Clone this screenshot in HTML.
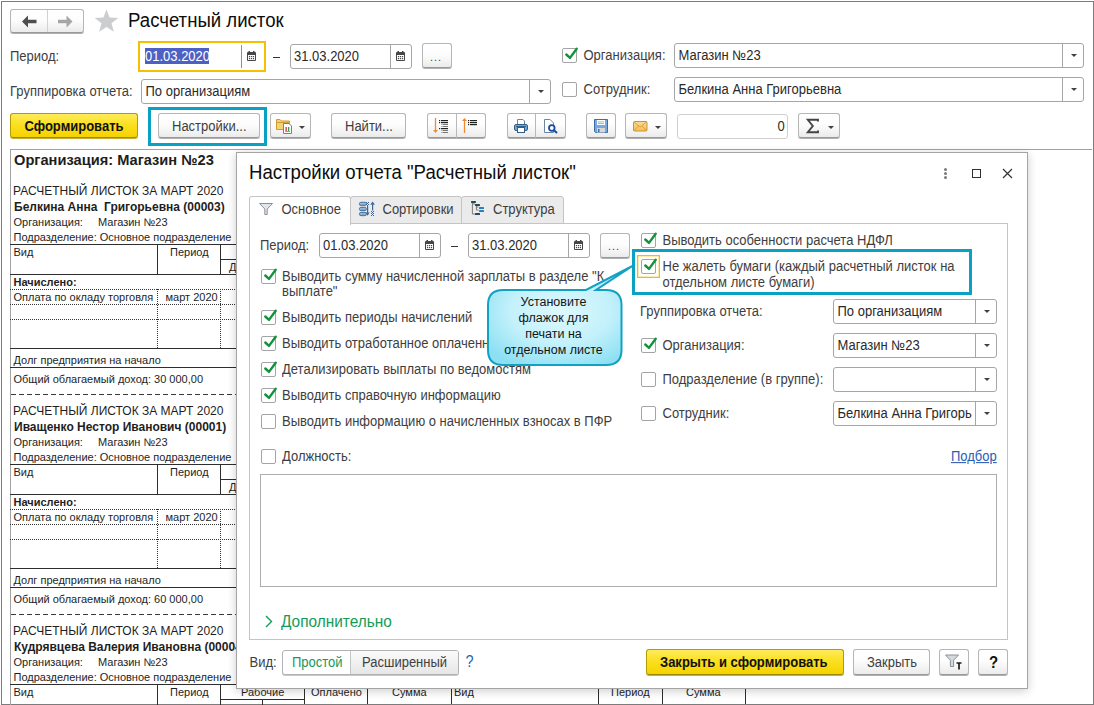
<!DOCTYPE html>
<html><head><meta charset="utf-8">
<style>
*{box-sizing:border-box;margin:0;padding:0}
html,body{width:1094px;height:705px;overflow:hidden;background:#fff}
body{position:relative;font-family:"Liberation Sans",sans-serif;font-size:13px;color:#333}
.a{position:absolute}
.t{position:absolute;white-space:nowrap;line-height:1}
.fld{position:absolute;border:1px solid #a6a6a6;border-radius:3px;background:#fff}
.dd{position:absolute;top:0;bottom:0;border-left:1px solid #a6a6a6}
.tri{position:absolute;width:0;height:0;border-left:3px solid transparent;border-right:3px solid transparent;border-top:3.5px solid #404040}
.btn{position:absolute;border:1px solid #b6b6b6;border-bottom-color:#999;border-radius:3px;background:linear-gradient(#fff 0%,#fdfdfd 45%,#ebebeb 100%);box-shadow:0 1px 0 #b0b0b0}
.ybtn{position:absolute;border:1px solid #b39b00;border-bottom-color:#9e8800;border-radius:3px;background:linear-gradient(#feeb5c,#fbe021 45%,#f5d300);box-shadow:0 1px 0 #c8b040}
.cb{position:absolute;width:15px;height:15px;border:1px solid #a4a4a4;border-radius:2px;background:#fff}
.rl{position:absolute;background:#2e2e2e}
.dot{position:absolute;height:1px;background-image:linear-gradient(90deg,#333 50%,transparent 50%);background-size:2px 1px}
.vdot{position:absolute;width:1px;background-image:linear-gradient(#333 50%,transparent 50%);background-size:1px 2px}
.dash{position:absolute;height:1px;background-image:linear-gradient(90deg,#3a3a3a 5px,transparent 5px);background-size:8px 1px;background-position:1px 0}
</style></head><body>
<div class="a" style="left:1px;top:1px;width:1093px;height:704px;border:1px solid #7c7c7c;"></div>
<div class="btn" style="left:10px;top:9px;width:74px;height:24px"></div>
<div class="a" style="left:47px;top:10px;width:1px;height:22px;background:#d2d2d2"></div>
<svg class="a" style="left:22px;top:15px" width="15" height="13" viewBox="0 0 15 13"><path d="M0 6.5 L6 0.5 L6 4.8 L14.5 4.8 L14.5 8.2 L6 8.2 L6 12.5 Z" fill="#4e4e4e"/></svg>
<svg class="a" style="left:58px;top:15px" width="15" height="13" viewBox="0 0 15 13"><path d="M14.5 6.5 L8.5 0.5 L8.5 4.8 L0 4.8 L0 8.2 L8.5 8.2 L8.5 12.5 Z" fill="#a6a6a6"/></svg>
<svg class="a" style="left:94px;top:9px" width="25" height="24" viewBox="0 0 25 24"><path d="M12.5 0.5 L15.6 8.6 L24.3 8.9 L17.5 14.3 L19.9 22.8 L12.5 17.9 L5.1 22.8 L7.5 14.3 L0.7 8.9 L9.4 8.6 Z" fill="#cbcdcf"/></svg>
<div class="t" style="left:128px;top:12.26px;font-size:18.6px;color:#0d0d0d;transform:scaleY(1.07);transform-origin:0 15.74px;">Расчетный листок</div>
<div class="t" style="left:10px;top:50.00px;font-size:13px;color:#3e3e3e;transform:scaleY(1.07);transform-origin:0 11.00px;">Период:</div>
<div class="a" style="left:138px;top:41px;width:128px;height:31px;border:2px solid #f3c100;background:#fff"></div>
<div class="a" style="left:241px;top:45px;width:1px;height:23px;background:#8e8e8e"></div>
<div class="a" style="left:145px;top:48px;width:64px;height:16px;background:#4d61c4"></div>
<div class="t" style="left:145px;top:50.00px;font-size:13px;color:#fff;transform:scaleY(1.07);transform-origin:0 11.00px;">01.03.2020</div>
<svg class="a" style="left:247px;top:51px" width="9" height="10" viewBox="0 0 9 10"><rect x="0" y="1" width="9" height="9" rx="1" fill="#474747"/><rect x="1" y="4" width="7" height="5" fill="#fff"/><g fill="#474747"><rect x="1.9" y="5" width="1.2" height="1.2"/><rect x="3.9" y="5" width="1.2" height="1.2"/><rect x="5.9" y="5" width="1.2" height="1.2"/><rect x="1.9" y="7" width="1.2" height="1.2"/><rect x="3.9" y="7" width="1.2" height="1.2"/><rect x="5.9" y="7" width="1.2" height="1.2"/></g><rect x="1.5" y="0" width="1.5" height="2.5" fill="#474747"/><rect x="6" y="0" width="1.5" height="2.5" fill="#474747"/></svg>
<div class="a" style="left:273px;top:57px;width:7px;height:1px;background:#333"></div>
<div class="fld" style="left:290px;top:44px;width:122px;height:25px"><div class="dd" style="left:99px"></div></div>
<div class="t" style="left:294px;top:50.00px;font-size:13px;color:#2a2a2a;transform:scaleY(1.07);transform-origin:0 11.00px;">31.03.2020</div>
<svg class="a" style="left:396px;top:51px" width="9" height="10" viewBox="0 0 9 10"><rect x="0" y="1" width="9" height="9" rx="1" fill="#474747"/><rect x="1" y="4" width="7" height="5" fill="#fff"/><g fill="#474747"><rect x="1.9" y="5" width="1.2" height="1.2"/><rect x="3.9" y="5" width="1.2" height="1.2"/><rect x="5.9" y="5" width="1.2" height="1.2"/><rect x="1.9" y="7" width="1.2" height="1.2"/><rect x="3.9" y="7" width="1.2" height="1.2"/><rect x="5.9" y="7" width="1.2" height="1.2"/></g><rect x="1.5" y="0" width="1.5" height="2.5" fill="#474747"/><rect x="6" y="0" width="1.5" height="2.5" fill="#474747"/></svg>
<div class="btn" style="left:422px;top:43px;width:30px;height:25px"></div>
<div class="t" style="left:430px;top:52px;font-size:11px;color:#444;letter-spacing:1px">...</div>
<div class="cb" style="left:562px;top:48px"><svg width="18" height="18" viewBox="0 0 18 18" style="position:absolute;left:-1px;top:-1px;overflow:visible"><path d="M4.3 6.5 L8 9.9 L14.7 0.7" stroke="#12923c" stroke-width="2.4" fill="none" stroke-linecap="round" stroke-linejoin="round"/></svg></div>
<div class="t" style="left:583.5px;top:49.00px;font-size:13px;color:#3e3e3e;transform:scaleY(1.07);transform-origin:0 11.00px;">Организация:</div>
<div class="fld" style="left:674px;top:43px;width:410px;height:25px"><div class="dd" style="left:387px"></div></div>
<div class="tri" style="left:1070.5px;top:53.5px"></div>
<div class="t" style="left:678.5px;top:49.00px;font-size:13px;color:#2a2a2a;transform:scaleY(1.07);transform-origin:0 11.00px;">Магазин №23</div>
<div class="t" style="left:10px;top:85.00px;font-size:13px;color:#3e3e3e;transform:scaleY(1.07);transform-origin:0 11.00px;">Группировка отчета:</div>
<div class="fld" style="left:141px;top:79px;width:410px;height:25px"><div class="dd" style="left:387px"></div></div>
<div class="tri" style="left:537.5px;top:89.5px"></div>
<div class="t" style="left:145.5px;top:85.00px;font-size:13px;color:#2a2a2a;transform:scaleY(1.07);transform-origin:0 11.00px;">По организациям</div>
<div class="cb" style="left:562px;top:82px"></div>
<div class="t" style="left:583.5px;top:83.00px;font-size:13px;color:#3e3e3e;transform:scaleY(1.07);transform-origin:0 11.00px;">Сотрудник:</div>
<div class="fld" style="left:674px;top:77px;width:410px;height:25px"><div class="dd" style="left:387px"></div></div>
<div class="tri" style="left:1070.5px;top:87.5px"></div>
<div class="t" style="left:678.5px;top:83.00px;font-size:13px;color:#2a2a2a;transform:scaleY(1.07);transform-origin:0 11.00px;">Белкина Анна Григорьевна</div>
<div class="ybtn" style="left:10px;top:113px;width:128px;height:25px"></div>
<div class="t" style="left:24.5px;top:120.00px;font-size:13px;color:#111;transform:scaleY(1.07);transform-origin:0 11.00px;font-weight:bold">Сформировать</div>
<div class="a" style="left:148px;top:107px;width:119px;height:39px;border:3px solid #0aa2c2"></div>
<div class="btn" style="left:158px;top:113px;width:102px;height:25px"></div>
<div class="t" style="left:172px;top:120.00px;font-size:13px;color:#3e3e3e;transform:scaleY(1.07);transform-origin:0 11.00px;">Настройки...</div>
<div class="btn" style="left:270px;top:113px;width:41px;height:25px"></div>
<svg class="a" style="left:275px;top:117px" width="18" height="18" viewBox="275 117 18 18">
<path d="M276.5 119.5 L280 119.5 L281.5 121 L289.5 121 L289.5 129.5 L276.5 129.5 Z" fill="#f3d27a" stroke="#d29a32" stroke-width="1"/>
<rect x="276.5" y="122" width="13" height="1" fill="#d29a32"/>
<path d="M283.5 123.5 L289 123.5 L291.5 126 L291.5 133.5 L283.5 133.5 Z" fill="#fff" stroke="#6c84a0" stroke-width="1"/>
<rect x="285.5" y="127" width="1.3" height="4" fill="#e03030"/><rect x="288" y="127" width="1.3" height="4" fill="#30a040"/><rect x="285" y="131.2" width="5" height="0.8" fill="#888"/>
</svg>
<div class="tri" style="left:299px;top:126.0px"></div>
<div class="btn" style="left:331px;top:113px;width:75px;height:25px"></div>
<div class="t" style="left:345px;top:120.00px;font-size:13px;color:#3e3e3e;transform:scaleY(1.07);transform-origin:0 11.00px;">Найти...</div>
<div class="btn" style="left:427px;top:113px;width:59px;height:25px"></div>
<div class="a" style="left:456px;top:114px;width:1px;height:24px;background:#b8b8b8"></div>
<svg class="a" style="left:430px;top:116px" width="55" height="20" viewBox="430 116 55 20">
<g stroke="#ee8a30" stroke-width="1.3" fill="#ee8a30"><path d="M435.5 118 L435.5 131" fill="none"/><path d="M433 130 L438 130 L435.5 133 Z" stroke="none"/>
<path d="M464.5 120 L464.5 133" fill="none"/><path d="M462 121 L467 121 L464.5 118 Z" stroke="none"/></g>
<g fill="#222"><rect x="439" y="120" width="1.2" height="1.2"/><rect x="441" y="120" width="7" height="1.2"/><rect x="439" y="122" width="1.2" height="1.2"/><rect x="441" y="122" width="7" height="1.2"/><rect x="439" y="128" width="1.2" height="1.2"/><rect x="441" y="128" width="7" height="1.2"/></g>
<g fill="#777"><rect x="441.5" y="124" width="1" height="1"/><rect x="443" y="124" width="5" height="1"/><rect x="441.5" y="126" width="1" height="1"/><rect x="443" y="126" width="5" height="1"/><rect x="441.5" y="130" width="1" height="1"/><rect x="443" y="130" width="5" height="1"/><rect x="441.5" y="132" width="1" height="1"/><rect x="443" y="132" width="5" height="1"/></g>
<g fill="#222"><rect x="468" y="120" width="1.2" height="1.2"/><rect x="470" y="120" width="7" height="1.2"/><rect x="468" y="122" width="1.2" height="1.2"/><rect x="470" y="122" width="7" height="1.2"/><rect x="468" y="124" width="1.2" height="1.2"/><rect x="470" y="124" width="7" height="1.2"/></g>
</svg>
<div class="btn" style="left:507px;top:113px;width:59px;height:25px"></div>
<div class="a" style="left:535px;top:114px;width:1px;height:24px;background:#b8b8b8"></div>
<svg class="a" style="left:510px;top:116px" width="50" height="20" viewBox="510 116 50 20">
<path d="M517.5 119.5 L523 119.5 L524.5 121 L524.5 124.5 L517.5 124.5 Z" fill="#fff" stroke="#6c84a0" stroke-width="1"/>
<rect x="514.5" y="124.5" width="13" height="6" rx="1.5" fill="#7aa7d0" stroke="#2e5f8a" stroke-width="1"/>
<rect x="516" y="126" width="10" height="1" fill="#2e5f8a"/>
<rect x="517.5" y="127.5" width="7" height="5" fill="#fff" stroke="#2e5f8a" stroke-width="1"/>
<path d="M544.5 119.5 L550 119.5 L553.5 123 L553.5 132.5 L544.5 132.5 Z" fill="#fff" stroke="#6c84a0" stroke-width="1"/>
<circle cx="551.8" cy="128" r="2.8" fill="#fff" stroke="#1a4b9c" stroke-width="1.8"/>
<path d="M553.8 130 L557 133" stroke="#1a4b9c" stroke-width="2"/>
</svg>
<div class="btn" style="left:586px;top:113px;width:30px;height:25px"></div>
<svg class="a" style="left:592px;top:117px" width="18" height="18" viewBox="592 117 18 18">
<path d="M594.5 119.5 L607.5 119.5 L607.5 132.5 L595.5 132.5 L594.5 131.5 Z" fill="#79a8dc" stroke="#3d6ea6" stroke-width="1"/>
<rect x="597" y="120" width="8" height="5" fill="#fff"/><rect x="598" y="121.5" width="6" height="0.8" fill="#8ab"/><rect x="598" y="123" width="6" height="0.8" fill="#8ab"/>
<rect x="597" y="128" width="8" height="4.5" fill="#d8d8d8"/><rect x="598" y="129" width="1.5" height="3" fill="#3d6ea6"/>
</svg>
<div class="btn" style="left:625px;top:113px;width:42px;height:25px"></div>
<svg class="a" style="left:632px;top:120px" width="17" height="12" viewBox="632 120 17 12">
<defs><linearGradient id="env" x1="0" y1="0" x2="0" y2="1"><stop offset="0" stop-color="#f8dc96"/><stop offset="1" stop-color="#f0c060"/></linearGradient></defs>
<rect x="633.5" y="121.5" width="13.5" height="9.5" rx="1" fill="url(#env)" stroke="#d8902c" stroke-width="1"/>
<path d="M634 122 L640.2 127 L646.5 122 M634 130.5 L638.5 126 M646.5 130.5 L642 126" stroke="#d8902c" stroke-width="0.8" fill="none"/>
</svg>
<div class="tri" style="left:654.5px;top:126.0px"></div>
<div class="a" style="left:677px;top:114px;width:111px;height:25px;border:1px solid #d0d0d0;border-radius:3px"></div>
<div class="t" style="left:777.5px;top:120.00px;font-size:13px;color:#2a2a2a;transform:scaleY(1.07);transform-origin:0 11.00px;">0</div>
<div class="btn" style="left:798px;top:113px;width:42px;height:25px"></div>
<svg class="a" style="left:805px;top:118px" width="15" height="16" viewBox="805 118 15 16">
<path d="M818 121.5 L818 119.8 L807.8 119.8 L812.8 126 L807.8 132.2 L818 132.2 L818 130.5" stroke="#444" stroke-width="1.9" fill="none" stroke-linejoin="miter"/>
</svg>
<div class="tri" style="left:827.5px;top:126.0px"></div>
<div class="a" style="left:10px;top:149px;width:1082px;height:1px;background:#a2a2a2"></div>
<div class="a" style="left:10px;top:149px;width:1px;height:556px;background:#a2a2a2"></div>
<div class="t" style="left:14px;top:152.60px;font-size:14.65px;color:#1e1e1e;font-weight:bold;">Организация: Магазин №23</div>
<div class="t" style="left:13px;top:184.84px;font-size:12px;color:#1e1e1e;">РАСЧЕТНЫЙ ЛИСТОК ЗА МАРТ 2020</div>
<div class="t" style="left:14px;top:200.84px;font-size:12px;color:#1e1e1e;font-weight:bold;">Белкина Анна&nbsp; Григорьевна (00003)</div>
<div class="t" style="left:13.5px;top:216.69px;font-size:11px;color:#1e1e1e;">Организация:</div>
<div class="t" style="left:98px;top:216.69px;font-size:11px;color:#1e1e1e;">Магазин №23</div>
<div class="t" style="left:13.5px;top:231.69px;font-size:11px;color:#1e1e1e;">Подразделение: Основное подразделение</div>
<div class="rl" style="left:10px;top:244px;width:226px;height:1px"></div>
<div class="t" style="left:13.5px;top:247.19px;font-size:11px;color:#1e1e1e;">Вид</div>
<div class="t" style="left:170px;top:247.19px;font-size:11px;color:#1e1e1e;">Период</div>
<div class="rl" style="left:157px;top:244px;width:1px;height:30px"></div>
<div class="rl" style="left:220px;top:244px;width:1px;height:30px"></div>
<div class="rl" style="left:220px;top:259px;width:16px;height:1px"></div>
<div class="t" style="left:229px;top:261.69px;font-size:11px;color:#1e1e1e;">Д</div>
<div class="rl" style="left:10px;top:274px;width:226px;height:1px"></div>
<div class="t" style="left:13.5px;top:276.69px;font-size:11px;color:#1e1e1e;font-weight:bold;">Начислено:</div>
<div class="dot" style="left:10px;top:289px;width:226px;height:1px"></div>
<div class="t" style="left:13.5px;top:291.69px;font-size:11px;color:#1e1e1e;">Оплата по окладу торговля</div>
<div class="t" style="left:165.5px;top:291.69px;font-size:11px;color:#1e1e1e;">март 2020</div>
<div class="dot" style="left:10px;top:304px;width:226px;height:1px"></div>
<div class="dot" style="left:10px;top:319px;width:226px;height:1px"></div>
<div class="vdot" style="left:157px;top:289px;width:1px;height:59px"></div>
<div class="vdot" style="left:220px;top:289px;width:1px;height:59px"></div>
<div class="rl" style="left:10px;top:348px;width:226px;height:1px"></div>
<div class="t" style="left:13.5px;top:354.69px;font-size:11px;color:#1e1e1e;">Долг предприятия на начало</div>
<div class="rl" style="left:10px;top:367px;width:226px;height:1px"></div>
<div class="t" style="left:13.5px;top:373.69px;font-size:11px;color:#1e1e1e;">Общий облагаемый доход: 30 000,00</div>
<div class="dash" style="left:10px;top:394px;width:226px;height:1px"></div>
<div class="t" style="left:13px;top:404.84px;font-size:12px;color:#1e1e1e;">РАСЧЕТНЫЙ ЛИСТОК ЗА МАРТ 2020</div>
<div class="t" style="left:14px;top:420.84px;font-size:12px;color:#1e1e1e;font-weight:bold;">Иващенко Нестор Иванович (00001)</div>
<div class="t" style="left:13.5px;top:436.69px;font-size:11px;color:#1e1e1e;">Организация:</div>
<div class="t" style="left:98px;top:436.69px;font-size:11px;color:#1e1e1e;">Магазин №23</div>
<div class="t" style="left:13.5px;top:451.69px;font-size:11px;color:#1e1e1e;">Подразделение: Основное подразделение</div>
<div class="rl" style="left:10px;top:464px;width:226px;height:1px"></div>
<div class="t" style="left:13.5px;top:467.19px;font-size:11px;color:#1e1e1e;">Вид</div>
<div class="t" style="left:170px;top:467.19px;font-size:11px;color:#1e1e1e;">Период</div>
<div class="rl" style="left:157px;top:464px;width:1px;height:30px"></div>
<div class="rl" style="left:220px;top:464px;width:1px;height:30px"></div>
<div class="rl" style="left:220px;top:479px;width:16px;height:1px"></div>
<div class="t" style="left:229px;top:481.69px;font-size:11px;color:#1e1e1e;">Д</div>
<div class="rl" style="left:10px;top:494px;width:226px;height:1px"></div>
<div class="t" style="left:13.5px;top:496.69px;font-size:11px;color:#1e1e1e;font-weight:bold;">Начислено:</div>
<div class="dot" style="left:10px;top:509px;width:226px;height:1px"></div>
<div class="t" style="left:13.5px;top:511.69px;font-size:11px;color:#1e1e1e;">Оплата по окладу торговля</div>
<div class="t" style="left:165.5px;top:511.69px;font-size:11px;color:#1e1e1e;">март 2020</div>
<div class="dot" style="left:10px;top:524px;width:226px;height:1px"></div>
<div class="dot" style="left:10px;top:539px;width:226px;height:1px"></div>
<div class="vdot" style="left:157px;top:509px;width:1px;height:59px"></div>
<div class="vdot" style="left:220px;top:509px;width:1px;height:59px"></div>
<div class="rl" style="left:10px;top:568px;width:226px;height:1px"></div>
<div class="t" style="left:13.5px;top:574.69px;font-size:11px;color:#1e1e1e;">Долг предприятия на начало</div>
<div class="rl" style="left:10px;top:587px;width:226px;height:1px"></div>
<div class="t" style="left:13.5px;top:593.69px;font-size:11px;color:#1e1e1e;">Общий облагаемый доход: 60 000,00</div>
<div class="dash" style="left:10px;top:614px;width:226px;height:1px"></div>
<div class="t" style="left:13px;top:624.84px;font-size:12px;color:#1e1e1e;">РАСЧЕТНЫЙ ЛИСТОК ЗА МАРТ 2020</div>
<div class="t" style="left:14px;top:640.84px;font-size:12px;color:#1e1e1e;font-weight:bold;">Кудрявцева Валерия Ивановна (00004)</div>
<div class="t" style="left:13.5px;top:656.69px;font-size:11px;color:#1e1e1e;">Организация:</div>
<div class="t" style="left:98px;top:656.69px;font-size:11px;color:#1e1e1e;">Магазин №23</div>
<div class="t" style="left:13.5px;top:671.69px;font-size:11px;color:#1e1e1e;">Подразделение: Основное подразделение</div>
<div class="rl" style="left:10px;top:684px;width:226px;height:1px"></div>
<div class="t" style="left:13.5px;top:687.19px;font-size:11px;color:#1e1e1e;">Вид</div>
<div class="t" style="left:170px;top:687.19px;font-size:11px;color:#1e1e1e;">Период</div>
<div class="rl" style="left:157px;top:684px;width:1px;height:30px"></div>
<div class="rl" style="left:220px;top:684px;width:1px;height:30px"></div>
<div class="rl" style="left:220px;top:699px;width:84px;height:1px"></div>
<div class="rl" style="left:262px;top:699px;width:1px;height:6px"></div>
<div class="rl" style="left:220px;top:686px;width:1px;height:18px"></div>
<div class="rl" style="left:304px;top:686px;width:1px;height:18px"></div>
<div class="rl" style="left:367px;top:686px;width:1px;height:18px"></div>
<div class="rl" style="left:451px;top:686px;width:1px;height:18px"></div>
<div class="rl" style="left:598px;top:686px;width:1px;height:18px"></div>
<div class="rl" style="left:662px;top:686px;width:1px;height:18px"></div>
<div class="rl" style="left:745px;top:686px;width:1px;height:18px"></div>
<div class="t" style="left:241px;top:686.69px;font-size:11px;color:#1e1e1e;">Рабочие</div>
<div class="t" style="left:311px;top:686.69px;font-size:11px;color:#1e1e1e;">Оплачено</div>
<div class="t" style="left:392px;top:686.69px;font-size:11px;color:#1e1e1e;">Сумма</div>
<div class="t" style="left:454px;top:686.69px;font-size:11px;color:#1e1e1e;">Вид</div>
<div class="t" style="left:611px;top:686.69px;font-size:11px;color:#1e1e1e;">Период</div>
<div class="t" style="left:686px;top:686.69px;font-size:11px;color:#1e1e1e;">Сумма</div>
<div class="a" style="left:236px;top:152px;width:792px;height:537px;border:1px solid #a4a4a4;background:#fff;box-shadow:0 2px 9px rgba(0,0,0,0.20)"></div>
<div class="t" style="left:249px;top:164.26px;font-size:18.6px;color:#0d0d0d;transform:scaleY(1.07);transform-origin:0 15.74px;">Настройки отчета "Расчетный листок"</div>
<div class="a" style="left:944px;top:168px;width:3px;height:3px;border-radius:50%;background:#7a7a7a"></div>
<div class="a" style="left:944px;top:172px;width:3px;height:3px;border-radius:50%;background:#7a7a7a"></div>
<div class="a" style="left:944px;top:176px;width:3px;height:3px;border-radius:50%;background:#7a7a7a"></div>
<div class="a" style="left:972px;top:169px;width:9px;height:9px;border:1.3px solid #303030"></div>
<svg class="a" style="left:1002px;top:168px" width="11" height="11" viewBox="0 0 11 11"><path d="M1 1 L10 10 M10 1 L1 10" stroke="#303030" stroke-width="1.15"/></svg>
<div class="a" style="left:350px;top:196px;width:112px;height:28px;border:1px solid #c4c4c4;border-radius:3px 3px 0 0;background:#ebebeb"></div>
<div class="a" style="left:461px;top:196px;width:103px;height:28px;border:1px solid #c4c4c4;border-radius:3px 3px 0 0;background:#ebebeb"></div>
<div class="a" style="left:249px;top:223px;width:759px;height:417px;border:1px solid #c4c4c4;background:#fff"></div>
<div class="a" style="left:249px;top:196px;width:102px;height:29px;border:1px solid #c4c4c4;border-bottom:none;border-radius:3px 3px 0 0;background:#fff"></div>
<svg class="a" style="left:259px;top:203px" width="14" height="12" viewBox="0 0 14 12"><path d="M0.5 0.5 L13.5 0.5 L8.2 6 L8.2 11.5 L5.8 11.5 L5.8 6 Z" fill="#e2e5ea" stroke="#8a9099" stroke-width="1"/></svg>
<div class="t" style="left:281.5px;top:203.00px;font-size:13px;color:#3e3e3e;transform:scaleY(1.07);transform-origin:0 11.00px;">Основное</div>
<svg class="a" style="left:355px;top:199px" width="25" height="20" viewBox="0 0 25 20"><defs><linearGradient id="sb" x1="0" y1="0" x2="0" y2="1"><stop offset="0" stop-color="#3f6f9c"/><stop offset="0.45" stop-color="#a9cde6"/><stop offset="1" stop-color="#3f6f9c"/></linearGradient></defs><g fill="url(#sb)" stroke="#3d6a96" stroke-width="0.7"><rect x="4.3" y="3.2" width="7.2" height="3.4" rx="1.7"/><rect x="4.3" y="8.3" width="7.2" height="3.4" rx="1.7"/><rect x="4.3" y="13.3" width="7.2" height="3.4" rx="1.7"/></g><g fill="#3a6797"><rect x="11" y="3" width="1" height="1"/><rect x="13" y="3" width="1" height="1"/><rect x="12" y="4" width="1" height="1"/><rect x="11" y="5" width="1" height="1"/><rect x="13" y="5" width="1" height="1"/><rect x="12" y="6" width="1" height="1"/><rect x="12" y="7" width="1.2" height="7"/><path d="M10.6 13.5 L14.6 13.5 L12.6 16.8 Z"/><path d="M15.3 5.8 L19.9 5.8 L17.6 2.6 Z"/><rect x="17" y="5.5" width="1.2" height="6"/><rect x="16" y="12" width="1" height="1"/><rect x="18" y="12" width="1" height="1"/><rect x="17" y="13" width="1" height="1"/><rect x="16" y="14" width="1" height="1"/><rect x="18" y="14" width="1" height="1"/><rect x="17" y="15" width="1" height="1"/><rect x="16" y="16" width="1" height="1"/><rect x="18" y="16" width="1" height="1"/></g></svg>
<div class="t" style="left:382.5px;top:203.00px;font-size:13px;color:#3e3e3e;transform:scaleY(1.07);transform-origin:0 11.00px;">Сортировки</div>
<svg class="a" style="left:467px;top:199px" width="25" height="20" viewBox="0 0 25 20"><path d="M5.4 3 L5.4 15 L8 15 M5.4 5 L8 5 M9.4 6 L9.4 11 L11.5 11 M9.4 8 L11.5 8" stroke="#7a7a7a" stroke-width="1" fill="none"/><g fill="#244a60"><rect x="4" y="1.9" width="5" height="2" rx="0.6"/><rect x="8" y="5" width="5" height="2" rx="0.6"/><rect x="8" y="14" width="5" height="2" rx="0.6"/></g><g fill="#2a7fc0"><rect x="12" y="8" width="5" height="2" rx="0.6"/><rect x="12" y="11" width="5" height="2" rx="0.6"/></g></svg>
<div class="t" style="left:493px;top:203.00px;font-size:13px;color:#3e3e3e;transform:scaleY(1.07);transform-origin:0 11.00px;">Структура</div>
<div class="t" style="left:260px;top:239.00px;font-size:13px;color:#3e3e3e;transform:scaleY(1.07);transform-origin:0 11.00px;">Период:</div>
<div class="fld" style="left:319px;top:233px;width:122px;height:25px"><div class="dd" style="left:99px"></div></div>
<div class="t" style="left:323px;top:239.00px;font-size:13px;color:#2a2a2a;transform:scaleY(1.07);transform-origin:0 11.00px;">01.03.2020</div>
<svg class="a" style="left:425px;top:240px" width="9" height="10" viewBox="0 0 9 10"><rect x="0" y="1" width="9" height="9" rx="1" fill="#474747"/><rect x="1" y="4" width="7" height="5" fill="#fff"/><g fill="#474747"><rect x="1.9" y="5" width="1.2" height="1.2"/><rect x="3.9" y="5" width="1.2" height="1.2"/><rect x="5.9" y="5" width="1.2" height="1.2"/><rect x="1.9" y="7" width="1.2" height="1.2"/><rect x="3.9" y="7" width="1.2" height="1.2"/><rect x="5.9" y="7" width="1.2" height="1.2"/></g><rect x="1.5" y="0" width="1.5" height="2.5" fill="#474747"/><rect x="6" y="0" width="1.5" height="2.5" fill="#474747"/></svg>
<div class="a" style="left:451px;top:246px;width:7px;height:1px;background:#333"></div>
<div class="fld" style="left:468px;top:233px;width:122px;height:25px"><div class="dd" style="left:99px"></div></div>
<div class="t" style="left:472px;top:239.00px;font-size:13px;color:#2a2a2a;transform:scaleY(1.07);transform-origin:0 11.00px;">31.03.2020</div>
<svg class="a" style="left:574px;top:240px" width="9" height="10" viewBox="0 0 9 10"><rect x="0" y="1" width="9" height="9" rx="1" fill="#474747"/><rect x="1" y="4" width="7" height="5" fill="#fff"/><g fill="#474747"><rect x="1.9" y="5" width="1.2" height="1.2"/><rect x="3.9" y="5" width="1.2" height="1.2"/><rect x="5.9" y="5" width="1.2" height="1.2"/><rect x="1.9" y="7" width="1.2" height="1.2"/><rect x="3.9" y="7" width="1.2" height="1.2"/><rect x="5.9" y="7" width="1.2" height="1.2"/></g><rect x="1.5" y="0" width="1.5" height="2.5" fill="#474747"/><rect x="6" y="0" width="1.5" height="2.5" fill="#474747"/></svg>
<div class="btn" style="left:600px;top:233px;width:30px;height:25px"></div>
<div class="t" style="left:608px;top:241px;font-size:11px;color:#444;letter-spacing:1px">...</div>
<div class="cb" style="left:261px;top:269px"><svg width="18" height="18" viewBox="0 0 18 18" style="position:absolute;left:-1px;top:-1px;overflow:visible"><path d="M4.3 6.5 L8 9.9 L14.7 0.7" stroke="#12923c" stroke-width="2.4" fill="none" stroke-linecap="round" stroke-linejoin="round"/></svg></div>
<div class="t" style="left:282px;top:270.00px;font-size:13px;color:#3e3e3e;transform:scaleY(1.07);transform-origin:0 11.00px;">Выводить сумму начисленной зарплаты в разделе "К</div>
<div class="cb" style="left:261px;top:310px"><svg width="18" height="18" viewBox="0 0 18 18" style="position:absolute;left:-1px;top:-1px;overflow:visible"><path d="M4.3 6.5 L8 9.9 L14.7 0.7" stroke="#12923c" stroke-width="2.4" fill="none" stroke-linecap="round" stroke-linejoin="round"/></svg></div>
<div class="t" style="left:282px;top:311.00px;font-size:13px;color:#3e3e3e;transform:scaleY(1.07);transform-origin:0 11.00px;">Выводить периоды начислений</div>
<div class="cb" style="left:261px;top:336px"><svg width="18" height="18" viewBox="0 0 18 18" style="position:absolute;left:-1px;top:-1px;overflow:visible"><path d="M4.3 6.5 L8 9.9 L14.7 0.7" stroke="#12923c" stroke-width="2.4" fill="none" stroke-linecap="round" stroke-linejoin="round"/></svg></div>
<div class="t" style="left:282px;top:337.00px;font-size:13px;color:#3e3e3e;transform:scaleY(1.07);transform-origin:0 11.00px;">Выводить отработанное оплаченное время</div>
<div class="cb" style="left:261px;top:362px"><svg width="18" height="18" viewBox="0 0 18 18" style="position:absolute;left:-1px;top:-1px;overflow:visible"><path d="M4.3 6.5 L8 9.9 L14.7 0.7" stroke="#12923c" stroke-width="2.4" fill="none" stroke-linecap="round" stroke-linejoin="round"/></svg></div>
<div class="t" style="left:282px;top:363.00px;font-size:13px;color:#3e3e3e;transform:scaleY(1.07);transform-origin:0 11.00px;">Детализировать выплаты по ведомостям</div>
<div class="cb" style="left:261px;top:388px"><svg width="18" height="18" viewBox="0 0 18 18" style="position:absolute;left:-1px;top:-1px;overflow:visible"><path d="M4.3 6.5 L8 9.9 L14.7 0.7" stroke="#12923c" stroke-width="2.4" fill="none" stroke-linecap="round" stroke-linejoin="round"/></svg></div>
<div class="t" style="left:282px;top:389.00px;font-size:13px;color:#3e3e3e;transform:scaleY(1.07);transform-origin:0 11.00px;">Выводить справочную информацию</div>
<div class="cb" style="left:261px;top:414px"></div>
<div class="t" style="left:282px;top:415.00px;font-size:13px;color:#3e3e3e;transform:scaleY(1.07);transform-origin:0 11.00px;">Выводить информацию о начисленных взносах в ПФР</div>
<div class="t" style="left:282px;top:285.00px;font-size:13px;color:#3e3e3e;transform:scaleY(1.07);transform-origin:0 11.00px;">выплате"</div>
<div class="cb" style="left:261px;top:449px"></div>
<div class="t" style="left:282px;top:450.00px;font-size:13px;color:#3e3e3e;transform:scaleY(1.07);transform-origin:0 11.00px;">Должность:</div>
<div class="t" style="left:951px;top:450.00px;font-size:13px;color:#2a5db5;transform:scaleY(1.07);transform-origin:0 11.00px;text-decoration:underline">Подбор</div>
<div class="a" style="left:260px;top:474px;width:737px;height:113px;border:1px solid #adadad"></div>
<div class="cb" style="left:641px;top:233px"><svg width="18" height="18" viewBox="0 0 18 18" style="position:absolute;left:-1px;top:-1px;overflow:visible"><path d="M4.3 6.5 L8 9.9 L14.7 0.7" stroke="#12923c" stroke-width="2.4" fill="none" stroke-linecap="round" stroke-linejoin="round"/></svg></div>
<div class="t" style="left:662.5px;top:234.00px;font-size:13px;color:#3e3e3e;transform:scaleY(1.07);transform-origin:0 11.00px;">Выводить особенности расчета НДФЛ</div>
<div class="a" style="left:632px;top:249px;width:340px;height:46px;border:3px solid #0aa2c2"></div>
<div class="a" style="left:637px;top:255px;width:23px;height:23px;border:1px solid #f2bd00;box-shadow:inset 0 0 0 0.5px #f8d860"></div>
<div class="cb" style="left:641px;top:259px"><svg width="18" height="18" viewBox="0 0 18 18" style="position:absolute;left:-1px;top:-1px;overflow:visible"><path d="M4.3 6.5 L8 9.9 L14.7 0.7" stroke="#12923c" stroke-width="2.4" fill="none" stroke-linecap="round" stroke-linejoin="round"/></svg></div>
<div class="t" style="left:662.5px;top:260.00px;font-size:13px;color:#3e3e3e;transform:scaleY(1.07);transform-origin:0 11.00px;">Не жалеть бумаги (каждый расчетный листок на</div>
<div class="t" style="left:662.5px;top:276.00px;font-size:13px;color:#3e3e3e;transform:scaleY(1.07);transform-origin:0 11.00px;">отдельном листе бумаги)</div>
<div class="t" style="left:640px;top:305.00px;font-size:13px;color:#3e3e3e;transform:scaleY(1.07);transform-origin:0 11.00px;">Группировка отчета:</div>
<div class="cb" style="left:641px;top:338px"><svg width="18" height="18" viewBox="0 0 18 18" style="position:absolute;left:-1px;top:-1px;overflow:visible"><path d="M4.3 6.5 L8 9.9 L14.7 0.7" stroke="#12923c" stroke-width="2.4" fill="none" stroke-linecap="round" stroke-linejoin="round"/></svg></div>
<div class="t" style="left:662.5px;top:339.00px;font-size:13px;color:#3e3e3e;transform:scaleY(1.07);transform-origin:0 11.00px;">Организация:</div>
<div class="cb" style="left:641px;top:372px"></div>
<div class="t" style="left:662.5px;top:373.00px;font-size:13px;color:#3e3e3e;transform:scaleY(1.07);transform-origin:0 11.00px;">Подразделение (в группе):</div>
<div class="cb" style="left:641px;top:406px"></div>
<div class="t" style="left:662.5px;top:407.00px;font-size:13px;color:#3e3e3e;transform:scaleY(1.07);transform-origin:0 11.00px;">Сотрудник:</div>
<div class="fld" style="left:833px;top:299px;width:164px;height:25px"><div class="dd" style="left:141px"></div></div>
<div class="tri" style="left:983.5px;top:309.5px"></div>
<div class="t" style="left:837.5px;top:305.00px;font-size:13px;color:#2a2a2a;transform:scaleY(1.07);transform-origin:0 11.00px;width:137px;overflow:hidden">По организациям</div>
<div class="fld" style="left:833px;top:333px;width:164px;height:25px"><div class="dd" style="left:141px"></div></div>
<div class="tri" style="left:983.5px;top:343.5px"></div>
<div class="t" style="left:837.5px;top:339.00px;font-size:13px;color:#2a2a2a;transform:scaleY(1.07);transform-origin:0 11.00px;width:137px;overflow:hidden">Магазин №23</div>
<div class="fld" style="left:833px;top:367px;width:164px;height:25px"><div class="dd" style="left:141px"></div></div>
<div class="tri" style="left:983.5px;top:377.5px"></div>
<div class="fld" style="left:833px;top:401px;width:164px;height:25px"><div class="dd" style="left:141px"></div></div>
<div class="tri" style="left:983.5px;top:411.5px"></div>
<div class="t" style="left:837.5px;top:407.00px;font-size:13px;color:#2a2a2a;transform:scaleY(1.07);transform-origin:0 11.00px;width:137px;overflow:hidden">Белкина Анна Григорь</div>
<svg class="a" style="left:264px;top:615px" width="10" height="13" viewBox="0 0 10 13"><path d="M2 1 L7.5 6.5 L2 12" stroke="#17995a" stroke-width="1.4" fill="none"/></svg>
<div class="t" style="left:281px;top:613.96px;font-size:15.4px;color:#139c58;transform:scaleY(1.04);transform-origin:0 13.04px;">Дополнительно</div>
<div class="t" style="left:249.5px;top:656.00px;font-size:13px;color:#3e3e3e;transform:scaleY(1.07);transform-origin:0 11.00px;">Вид:</div>
<div class="a" style="left:282px;top:650px;width:177px;height:25px;border:1px solid #b2b2b2;border-radius:3px;background:#fff;overflow:hidden;box-shadow:0 1px 0 #c8c8c8"><div class="a" style="left:67px;top:0;right:0;bottom:0;border-left:1px solid #c4c4c4;background:linear-gradient(#fbfbfb,#e6e6e6)"></div></div>
<div class="t" style="left:292px;top:656.00px;font-size:13px;color:#17995a;transform:scaleY(1.07);transform-origin:0 11.00px;">Простой</div>
<div class="t" style="left:362px;top:656.00px;font-size:13px;color:#3e3e3e;transform:scaleY(1.07);transform-origin:0 11.00px;">Расширенный</div>
<div class="t" style="left:465.5px;top:654.73px;font-size:14.5px;color:#1f66b8;transform:scaleY(1.08);transform-origin:0 12.27px;">?</div>
<div class="ybtn" style="left:646px;top:649px;width:198px;height:26px"></div>
<div class="t" style="left:660px;top:656.00px;font-size:13px;color:#111;transform:scaleY(1.07);transform-origin:0 11.00px;font-weight:bold">Закрыть и сформировать</div>
<div class="btn" style="left:853px;top:649px;width:77px;height:26px"></div>
<div class="t" style="left:867px;top:656.00px;font-size:13px;color:#3e3e3e;transform:scaleY(1.07);transform-origin:0 11.00px;">Закрыть</div>
<div class="btn" style="left:939px;top:649px;width:30px;height:26px"></div>
<svg class="a" style="left:945px;top:654px" width="18" height="16" viewBox="0 0 18 16"><path d="M0.5 1 L13.5 1 L8.6 6.2 L8.6 12.5 L5.4 12.5 L5.4 6.2 Z" fill="#d6dade" stroke="#8a9099" stroke-width="1"/><path d="M11.5 9 L16.5 9 M14 9 L14 15.5" stroke="#1c1c1c" stroke-width="1.7"/></svg>
<div class="btn" style="left:978px;top:649px;width:30px;height:26px"></div>
<div class="t" style="left:989px;top:655.30px;font-size:15px;color:#111;transform:scaleY(1.07);transform-origin:0 12.70px;font-weight:bold">?</div>
<svg class="a" style="left:480px;top:258px" width="160" height="115" viewBox="480 258 160 115">
<defs><radialGradient id="bg" cx="0.5" cy="0.45" r="0.62"><stop offset="0" stop-color="#def8fd"/><stop offset="0.55" stop-color="#c4f1fb"/><stop offset="1" stop-color="#8de0f3"/></radialGradient></defs>
<path d="M503 290 L586 290 L632.5 266 L596 290 L606 290 Q621.5 290 621.5 305 L621.5 350 Q621.5 365 606 365 L503 365 Q488 365 488 350 L488 305 Q488 290 503 290 Z" fill="url(#bg)" stroke="#13a1c3" stroke-width="2"/>
</svg>
<div class="t" style="left:486.5px;width:134px;text-align:center;top:296.42px;font-size:12.5px;color:#141414;transform:scaleY(1.05);transform-origin:0 10.58px;">Установите</div>
<div class="t" style="left:486.5px;width:134px;text-align:center;top:312.42px;font-size:12.5px;color:#141414;transform:scaleY(1.05);transform-origin:0 10.58px;">флажок для</div>
<div class="t" style="left:486.5px;width:134px;text-align:center;top:328.42px;font-size:12.5px;color:#141414;transform:scaleY(1.05);transform-origin:0 10.58px;">печати на</div>
<div class="t" style="left:486.5px;width:134px;text-align:center;top:343.92px;font-size:12.5px;color:#141414;transform:scaleY(1.05);transform-origin:0 10.58px;">отдельном листе</div>
</body></html>
